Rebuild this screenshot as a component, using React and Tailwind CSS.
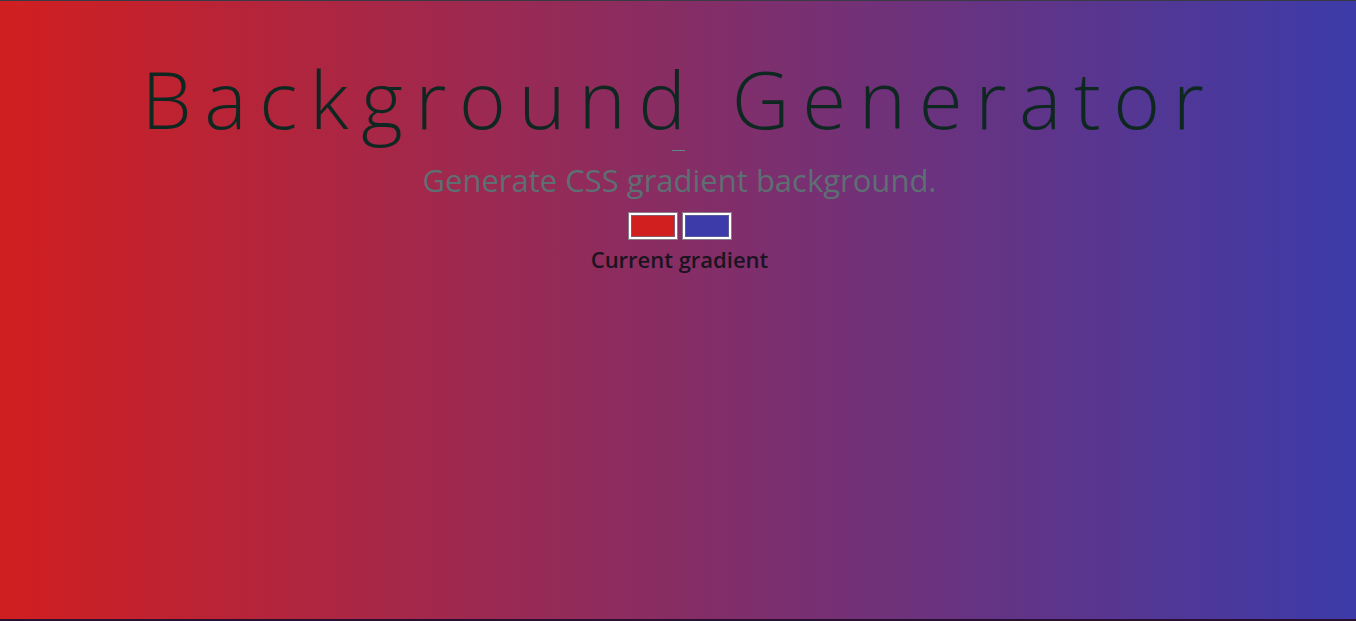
import React, { useState } from 'react'

export default function App() {
  const [color1, setColor1] = useState('#d11f20')
  const [color2, setColor2] = useState('#3c3ba9')

  return (
    <div
      className="flex min-h-[621px] h-[621px] w-full flex-col items-center border-t border-b-2 border-t-[#3a3a44] border-b-[#2a1030] text-center"
      style={{ background: `linear-gradient(to right, ${color1}, ${color2})` }}
    >
      {/* Title */}
      <h1 className="mt-[47px] pl-[2px] text-[80px] font-light leading-[100px] tracking-[12.6px] text-[#0f2721] [font-family:'Open_Sans',Lato,sans-serif]">
        Background Generator
      </h1>
      <div className="mt-[2px] h-px w-[13px] bg-[#5c8a86]"></div>

      {/* Subtitle */}
      <h3 className="mt-[11px] ml-[3px] text-[31px] leading-[36px] text-[#5e6f73] [font-family:'Open_Sans',sans-serif]">
        Generate CSS gradient background.
      </h3>

      {/* Color pickers */}
      <div className="mt-[15px] ml-[4px] flex gap-[6px]">
        <input
          type="color"
          value={color1}
          onChange={(e) => setColor1(e.target.value)}
          className="h-[26px] w-[48px] cursor-pointer appearance-none border-2 border-white bg-white p-0 outline outline-1 outline-[#8a7a8a] [&::-webkit-color-swatch-wrapper]:p-0 [&::-webkit-color-swatch]:border [&::-webkit-color-swatch]:border-[#8a5a6a]"
        />
        <input
          type="color"
          value={color2}
          onChange={(e) => setColor2(e.target.value)}
          className="h-[26px] w-[48px] cursor-pointer appearance-none border-2 border-white bg-white p-0 outline outline-1 outline-[#8a7a8a] [&::-webkit-color-swatch-wrapper]:p-0 [&::-webkit-color-swatch]:border [&::-webkit-color-swatch]:border-[#5a5a9a]"
        />
      </div>

      {/* Current gradient label */}
      <h3 className="mt-[5px] ml-[3px] text-[22px] font-semibold leading-[30px] text-[#1a1420] [font-family:'Open_Sans',sans-serif]">
        Current gradient
      </h3>
    </div>
  )
}
